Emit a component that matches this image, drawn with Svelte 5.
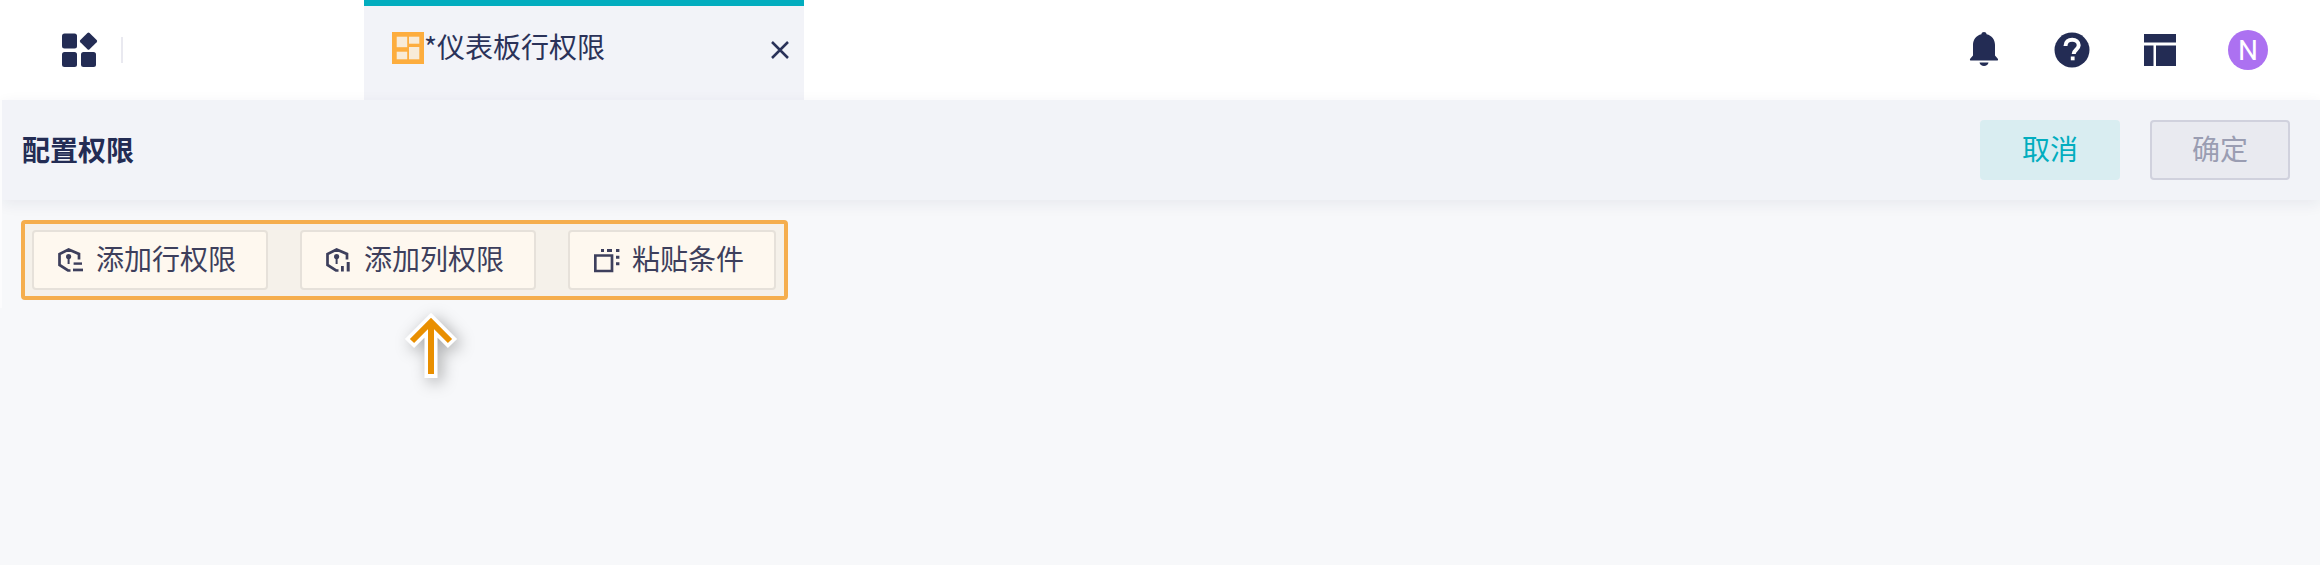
<script>
	const actions = [
		{ label: '添加行权限', icon: 'row' },
		{ label: '添加列权限', icon: 'col' },
		{ label: '粘贴条件', icon: 'paste' }
	];
</script>

<div class="page">
	<header class="topbar">
		<div class="brand">
			<svg class="apps" viewBox="0 0 36 36" width="36" height="36" aria-hidden="true">
				<rect x="0" y="1.500" width="15" height="15" rx="2.500" />
				<rect x="0" y="20" width="15" height="15" rx="2.500" />
				<rect x="19" y="20" width="15" height="15" rx="2.500" />
				<rect x="20" y="2.600" width="13" height="13" rx="1.500" transform="rotate(45 26.500 9.100)" />
			</svg>
			<span class="divider"></span>
		</div>
		<div class="tab">
			<svg class="tab__icon" viewBox="0 0 32 32" width="32" height="32" aria-hidden="true">
				<rect width="32" height="32" fill="#fdad3e" />
				<rect x="4.700" y="4.700" width="10.500" height="10.500" fill="#f8ebd8" />
				<rect x="4.700" y="19.700" width="10.500" height="7.600" fill="#f8ebd8" />
				<rect x="17" y="4.700" width="10.300" height="7" fill="#f8ebd8" />
				<rect x="17" y="15" width="10.300" height="12.300" fill="#f8ebd8" />
			</svg>
			<span class="tab__title">*仪表板行权限</span>
			<svg class="tab__close" viewBox="0 0 20 20" width="20" height="20" aria-hidden="true">
				<path d="M2 2 L18 18 M18 2 L2 18" />
			</svg>
		</div>
		<div class="tools">
			<svg viewBox="0 0 30 36" width="30" height="36" aria-hidden="true">
				<path d="M15 0c1.400 0 2.400 .9 2.600 2.200C22.800 3.400 26 7.500 26 12.800V23.500l2.800 3.200c.7.900.2 1.800-.9 1.800H2.100c-1.100 0-1.600-.9-.9-1.800L4 23.500V12.800C4 7.500 7.200 3.400 12.400 2.200 12.600 .9 13.600 0 15 0z" />
				<path d="M10.500 30.500h9c-.3 2.300-2.200 3.500-4.500 3.500s-4.200-1.200-4.500-3.500z" />
			</svg>
			<svg viewBox="0 0 36 36" width="36" height="36" aria-hidden="true">
				<circle cx="18" cy="18" r="17.500" />
				<path class="cut" d="M11.500 14c0-4 2.900-6.300 6.700-6.300 3.700 0 6.500 2.100 6.500 5.500 0 4.600-5 4.600-5 8.800" />
				<rect class="dot" x="16.800" y="24.500" width="3.800" height="3.800" />
			</svg>
			<svg viewBox="0 0 32 32" width="32" height="32" aria-hidden="true">
				<rect width="32" height="8.500" />
				<rect y="11.500" width="9.500" height="20.500" />
				<rect x="12" y="11.500" width="20" height="20.500" />
			</svg>
			<span class="avatar">N</span>
		</div>
	</header>

	<main class="content">
		<section class="head">
			<h1>配置权限</h1>
			<div class="head__btns">
				<button class="btn btn--cancel">取消</button>
				<button class="btn btn--ok">确定</button>
			</div>
		</section>

		<section class="body">
			<div class="highlight">
				{#each actions as a (a.label)}
					<button class="action">
						<svg viewBox="0 0 26 26" width="26" height="26" aria-hidden="true">
							{#if a.icon === 'paste'}
								<path class="line" d="M1.300 8.500H18V24H1.300z" />
								<path class="fill" d="M7 2h3v3H7zM13 2h5v3h-5zM22 2h3.400v3H22zM22 8.700h3.400v3H22zM22 15.300h3.400v3H22z" />
							{:else}
								<path class="line" d="M12.500 23.500H10L1.500 18V7L10.600 2.500 21 7V12.500" />
								<circle class="fill" cx="10.600" cy="9.500" r="2.600" />
								<rect class="fill" x="9.600" y="10" width="2" height="7" />
								{#if a.icon === 'row'}
									<rect class="fill" x="15.600" y="15.400" width="8.400" height="2.400" />
									<rect class="fill" x="15" y="21.600" width="10" height="2.700" />
								{:else}
									<rect class="fill" x="15" y="19" width="2.800" height="5.500" />
									<rect class="fill" x="20.700" y="15" width="3" height="9.500" />
								{/if}
							{/if}
						</svg>
						<span>{a.label}</span>
					</button>
				{/each}
			</div>

			<svg class="arrow" viewBox="0 0 60 70" width="60" height="70" aria-hidden="true">
				<path class="arrow__halo" d="M30 68V12M8.500 33.500 30 12 51.500 33.500" />
				<path class="arrow__stroke" d="M30 64V12M11 31 30 12 49 31" />
			</svg>
		</section>
	</main>
</div>

<style>
	:global(body) {
		margin: 0;
		background: #fff;
	}

	.page {
		height: 565px;
		display: flex;
		flex-direction: column;
		font-family: 'Noto Sans CJK SC', 'Liberation Sans', sans-serif;
		color: #232c54;
		overflow: hidden;
	}

	/* ---- top bar ---- */
	.topbar {
		height: 100px;
		flex: none;
		display: flex;
		background: #fff;
	}

	.brand {
		width: 364px;
		flex: none;
		display: flex;
		align-items: center;
		padding-left: 62px;
		box-sizing: border-box;
	}

	.apps {
		fill: #232c54;
	}

	.divider {
		width: 2px;
		height: 26px;
		margin-left: 23px;
		background: #e9e9f0;
	}

	.tab {
		width: 440px;
		flex: none;
		box-sizing: border-box;
		border-top: 6px solid #02adbf;
		background: #f2f3f8;
		padding: 26px 0 0 28px;
		display: flex;
		align-items: flex-start;
		position: relative;
	}

	.tab__title {
		font-size: 28px;
		line-height: 28px;
		color: #2a3259;
	}

	.tab__close {
		position: absolute;
		right: 14px;
		top: 34px;
		fill: none;
		stroke: #2a3259;
		stroke-width: 2.500;
	}

	.tools {
		margin-left: auto;
		display: flex;
		align-items: center;
		padding-right: 52px;
		fill: #232c54;
	}

	.tools svg:nth-child(1) {
		margin-right: 55px;
	}

	.tools svg:nth-child(2) {
		margin-right: 54px;
	}

	.tools svg:nth-child(3) {
		margin-right: 52px;
	}

	.cut {
		fill: none;
		stroke: #fff;
		stroke-width: 4;
	}

	.dot {
		fill: #fff;
	}

	.avatar {
		width: 40px;
		height: 40px;
		border-radius: 50%;
		background: #ac71f1;
		color: #fff;
		font-family: Roboto, 'Liberation Sans', sans-serif;
		font-size: 28px;
		display: flex;
		align-items: center;
		justify-content: center;
	}

	/* ---- content ---- */
	.content {
		flex: 1;
		display: flex;
		flex-direction: column;
		padding-left: 2px;
		background: #f7f8fa;
		position: relative;
	}

	/* pale strip along the left edge, it stops just under the toolbar */
	.content::before {
		content: '';
		position: absolute;
		left: 0;
		top: 0;
		width: 2px;
		height: 208px;
		background: #fcfcfd;
	}

	.head {
		height: 100px;
		flex: none;
		box-sizing: border-box;
		display: flex;
		align-items: center;
		justify-content: space-between;
		padding: 0 30px 0 20px;
		background: #f2f3f8;
		box-shadow: 0 4px 14px rgba(35, 44, 84, 0.07);
	}

	h1 {
		margin: 0 0 3px;
		font-size: 28px;
		font-weight: 700;
		color: #232c54;
	}

	.head__btns {
		display: flex;
		gap: 30px;
	}

	.btn {
		width: 140px;
		height: 60px;
		box-sizing: border-box;
		border-radius: 4px;
		font: inherit;
		font-size: 28px;
		padding: 0 0 4px;
	}

	.btn--cancel {
		border: 0;
		background: #d9edf1;
		color: #02adbf;
	}

	.btn--ok {
		border: 2px solid #d0d1dd;
		background: #e9eaf0;
		color: #9a9db2;
	}

	.body {
		position: relative;
		flex: 1;
		padding: 20px 0 0 19px;
	}

	.highlight {
		width: 767px;
		height: 80px;
		box-sizing: border-box;
		border: 4px solid #f5ae4e;
		border-radius: 4px;
		background: #f5f1ea;
		display: flex;
		align-items: center;
		padding-left: 7px;
		gap: 32px;
	}

	.action {
		height: 60px;
		box-sizing: border-box;
		border: 2px solid #e6e1da;
		border-radius: 4px;
		background: #fef8ef;
		color: #3d3f5c;
		font: inherit;
		font-size: 28px;
		display: flex;
		align-items: center;
		gap: 12px;
		padding: 0 30px 0 24px;
	}

	.action span {
		padding-bottom: 4px;
	}

	.action svg {
		flex: none;
	}

	.line {
		fill: none;
		stroke: #3d3f5c;
		stroke-width: 2.700;
	}

	.fill {
		fill: #3d3f5c;
	}

	.arrow {
		position: absolute;
		left: 399px;
		top: 110px;
		fill: none;
		overflow: visible;
		filter: drop-shadow(4px 4px 8px rgba(0, 0, 0, 0.32));
	}

	.arrow__halo {
		stroke: #fff;
		stroke-width: 13;
	}

	.arrow__stroke {
		stroke: #e98f00;
		stroke-width: 6;
	}
</style>
